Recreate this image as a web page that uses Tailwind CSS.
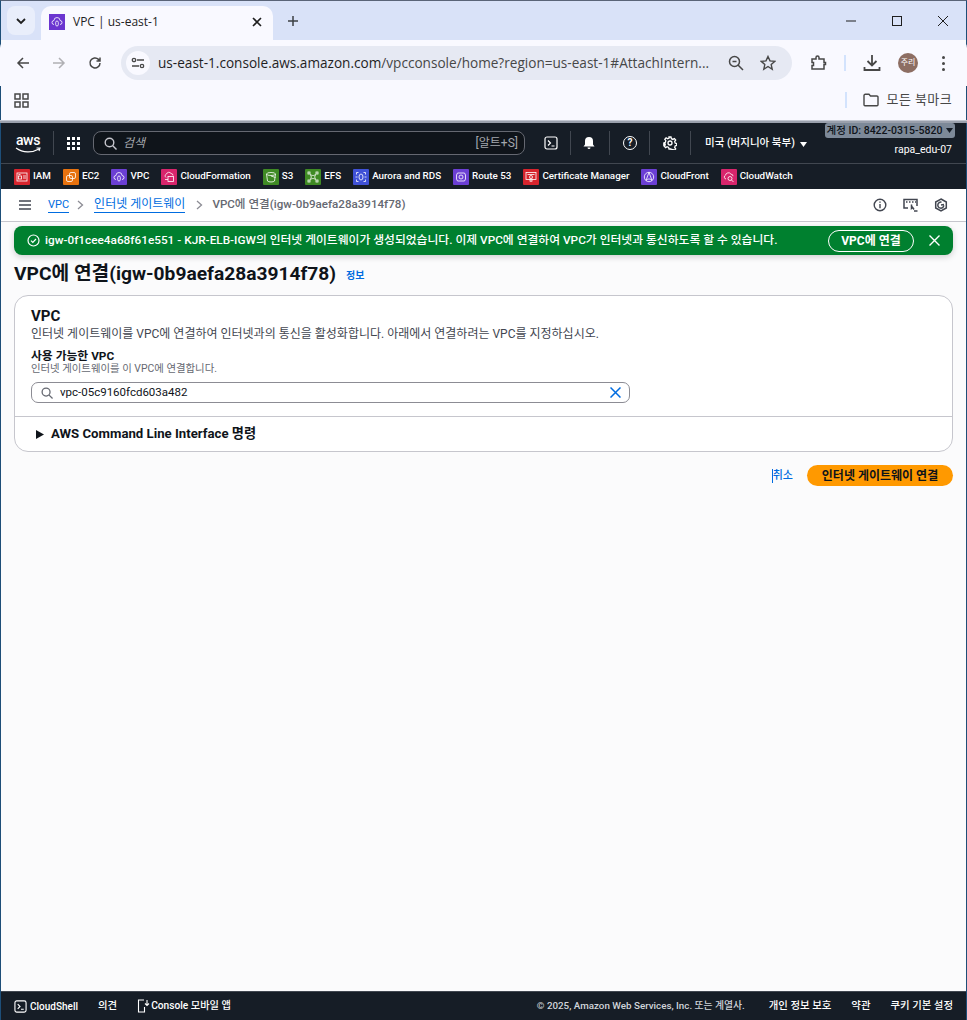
<!DOCTYPE html>
<html lang="ko">
<head>
  <meta charset="UTF-8" />
  <title>VPC | us-east-1</title>
  <script src="https://cdn.jsdelivr.net/npm/@tailwindcss/browser@4"></script>
</head>
<body class="w-[967px] h-[1020px] overflow-hidden bg-[#fbfbfc] font-['Roboto','Noto_Sans_CJK_KR',sans-serif] text-[#0f141a]">
<div class="flex flex-col h-[1020px] border-x border-[#1d4e78] border-t border-t-[#5a6478]">

  <!-- tab strip -->
  <div class="h-[39px] shrink-0 bg-[#d9e2f8] flex items-start relative">
    <div class="mt-[5px] ml-[6px] w-[28px] h-[29px] rounded-lg bg-[#e9eefb] flex items-center justify-center">
      <svg width="12" height="12" viewBox="0 0 12 12" fill="none" stroke="#1f1f1f" stroke-width="1.8"><path d="M2 4l4 4 4-4"/></svg>
    </div>
    <div class="ml-[6px] mt-[5px] w-[232px] h-[34px] bg-[#f9f9ff] rounded-t-[10px] flex items-center pl-[8px] pr-[11px] pb-[3px]">
      <div class="w-4 h-4 bg-[#6b35d0] flex items-center justify-center">
        <svg width="12" height="12" viewBox="0 0 12 12" fill="none" stroke="#fff" stroke-width=".8"><path d="M3 8.5a2 2 0 0 1 0-4 3 3 0 0 1 6 0 2 2 0 0 1 0 4"/><rect x="4.7" y="5" width="2.6" height="5" rx="1.3"/></svg>
      </div>
      <span class="ml-2 text-xs text-[#1f1f1f] font-['Open_Sans',sans-serif]">VPC | us-east-1</span>
      <svg class="ml-auto" width="10" height="10" viewBox="0 0 10 10" stroke="#1f1f1f" stroke-width="1.6"><path d="M1 1l8 8M9 1l-8 8"/></svg>
    </div>
    <svg class="ml-[14px] mt-[14px]" width="12" height="12" viewBox="0 0 12 12" stroke="#3c4043" stroke-width="1.5"><path d="M6 1v10M1 6h10"/></svg>
    <div class="ml-auto flex items-center mt-[15px] gap-[36px] pr-[18px]">
      <svg width="10" height="10" viewBox="0 0 10 10" stroke="#1f1f1f"><path d="M0 5h10"/></svg>
      <svg width="10" height="10" viewBox="0 0 10 10" stroke="#1f1f1f" fill="none"><rect x=".5" y=".5" width="9" height="9"/></svg>
      <svg width="10" height="10" viewBox="0 0 10 10" stroke="#1f1f1f"><path d="M0 0l10 10M10 0L0 10"/></svg>
    </div>
  </div>

  <!-- address bar -->
  <div class="h-[46px] shrink-0 bg-[#f9f9ff] rounded-t-[8px] flex items-center -mx-px px-px relative">
    <svg class="ml-[15px]" width="14" height="14" viewBox="0 0 14 14" fill="none" stroke="#474747" stroke-width="1.5"><path d="M13 7H2M7 2L2 7l5 5"/></svg>
    <svg class="ml-[22px]" width="14" height="14" viewBox="0 0 14 14" fill="none" stroke="#b0b0b4" stroke-width="1.5"><path d="M1 7h11M7 2l5 5-5 5"/></svg>
    <svg class="ml-[22px]" width="14" height="14" viewBox="0 0 14 14" fill="none" stroke="#474747" stroke-width="1.5"><path d="M12 7a5 5 0 1 1-1.5-3.6L12 5M12 1.5V5H8.5"/></svg>
    <div class="ml-[19px] w-[671px] h-[34px] rounded-full bg-[#e6e9f3] flex items-center pl-[5px] pr-[16px]">
      <div class="w-6 h-6 rounded-full bg-[#f9f9ff] flex items-center justify-center">
        <svg width="14" height="14" viewBox="0 0 14 14" fill="none" stroke="#474747" stroke-width="1.3"><path d="M6 4h7M1 10h7"/><circle cx="3" cy="4" r="1.7"/><circle cx="11" cy="10" r="1.7"/></svg>
      </div>
      <span class="ml-[8px] text-[13.6px] text-[#1f1f1f] font-['Open_Sans',sans-serif] whitespace-nowrap">us-east-1.console.aws.amazon.com<span class="text-[#474747]">/vpcconsole/home?region=us-east-1#AttachIntern...</span></span>
      <svg class="ml-auto" width="16" height="16" viewBox="0 0 16 16" fill="none" stroke="#474747" stroke-width="1.5"><circle cx="6.5" cy="6.5" r="5"/><path d="M10 10l5 5M4.5 6.5h4"/></svg>
      <svg class="ml-[16px]" width="16" height="16" viewBox="0 0 16 16" fill="none" stroke="#474747" stroke-width="1.4"><path d="M8 1.5l2 4.4 4.7.5-3.5 3.2 1 4.7L8 11.5l-4.2 2.8 1-4.7L1.3 6.4 6 5.900z"/></svg>
    </div>
    <svg class="ml-[19px]" width="16" height="16" viewBox="0 0 16 16" fill="none" stroke="#474747" stroke-width="1.5"><path d="M1 4h4V2.500a1.500 1.500 0 0 1 3 0V4h5v3.500h1.500v2H13V14H1v-3.500h1.500v-3H1z"/></svg>
    <div class="ml-[17px] w-[2px] h-[16px] bg-[#d3e3fd]"></div>
    <svg class="ml-[17px]" width="18" height="18" viewBox="0 0 18 18" fill="none" stroke="#474747" stroke-width="1.8"><path d="M9 1v10M4.500 7L9 11.500 13.500 7M1.500 13v3h15v-3"/></svg>
    <div class="ml-[17px] w-[20px] h-[20px] rounded-full bg-[#8d6e63] text-white text-[8px] flex items-center justify-center">주리</div>
    <div class="ml-[24px] flex flex-col gap-[3px]">
      <span class="w-[3px] h-[3px] rounded-full bg-[#474747]"></span>
      <span class="w-[3px] h-[3px] rounded-full bg-[#474747]"></span>
      <span class="w-[3px] h-[3px] rounded-full bg-[#474747]"></span>
    </div>
  </div>

  <!-- bookmarks bar -->
  <div class="h-[34px] shrink-0 bg-[#f9f9ff] flex items-center pl-[13px] pb-[6px]">
    <svg width="15" height="15" viewBox="0 0 15 15" fill="none" stroke="#474747" stroke-width="1.5"><rect x="1" y="1" width="5" height="5"/><rect x="9" y="1" width="5" height="5"/><rect x="1" y="9" width="5" height="5"/><rect x="9" y="9" width="5" height="5"/></svg>
    <div class="ml-auto flex items-center pr-[14px]">
      <div class="w-[2px] h-[16px] bg-[#d3e3fd]"></div>
      <svg class="ml-[16px]" width="16" height="14" viewBox="0 0 16 14" fill="none" stroke="#474747" stroke-width="1.4"><path d="M1 2.500A1.200 1.200 0 0 1 2.200 1.300H6l1.500 1.700h6.300A1.200 1.200 0 0 1 15 4.200v7.600a1 1 0 0 1-1 1H2a1 1 0 0 1-1-1z"/></svg>
      <span class="ml-[8px] text-[13px] tracking-[.4px] text-[#474747]">모든 북마크</span>
    </div>
  </div>

  <div class="h-[3px] shrink-0 bg-[#9aa0ac] border-t border-[#c3c7d1] -mx-px"></div>

  <!-- aws top nav -->
  <div class="h-[40px] shrink-0 bg-[#161d26] text-white flex items-center relative">
    <div class="ml-[14px] w-[26px] flex flex-col items-center">
      <span class="text-[14px] leading-[13px] font-medium tracking-[-.3px]">aws</span>
      <svg width="26" height="6" viewBox="0 0 26 6" fill="none" stroke="#fff" stroke-width="1.1"><path d="M1 1c7 5 16 5 23 1M21.500 1H25l-1 3"/></svg>
    </div>
    <div class="ml-[12px] w-px h-[24px] bg-[#414750]"></div>
    <div class="ml-[13px] grid grid-cols-3 gap-[2px]">
      <span class="w-[3px] h-[3px] bg-white"></span><span class="w-[3px] h-[3px] bg-white"></span><span class="w-[3px] h-[3px] bg-white"></span>
      <span class="w-[3px] h-[3px] bg-white"></span><span class="w-[3px] h-[3px] bg-white"></span><span class="w-[3px] h-[3px] bg-white"></span>
      <span class="w-[3px] h-[3px] bg-white"></span><span class="w-[3px] h-[3px] bg-white"></span><span class="w-[3px] h-[3px] bg-white"></span>
    </div>
    <div class="ml-[13px] w-[432px] h-[24px] rounded-lg border border-[#656871] bg-[#0f141a] flex items-center pl-[10px] pr-[6px]">
      <svg width="13" height="13" viewBox="0 0 13 13" fill="none" stroke="#c6c6cd" stroke-width="1.4"><circle cx="5.500" cy="5.500" r="4.300"/><path d="M8.800 8.800L12.500 12.500"/></svg>
      <span class="ml-[6px] text-[12px] italic text-[#a4a7ad]">검색</span>
      <span class="ml-auto text-[12px] text-[#a4a7ad]">[알트+S]</span>
    </div>
    <svg class="ml-[19px]" width="14" height="14" viewBox="0 0 14 14" fill="none" stroke="#fff" stroke-width="1.2"><rect x="1" y="1" width="12" height="12" rx="2"/><path d="M4 4.500L6.500 7 4 9.500M7.500 10H10.500"/></svg>
    <div class="ml-[12px] w-px h-[24px] bg-[#414750]"></div>
    <svg class="ml-[11px]" width="14" height="14" viewBox="0 0 14 14" fill="#fff"><path d="M7 1a4 4 0 0 0-4 4v3.500L1.500 10.500h11L11 8.500V5a4 4 0 0 0-4-4zM5.500 11.500a1.500 1.500 0 0 0 3 0z"/></svg>
    <div class="ml-[13px] w-px h-[24px] bg-[#414750]"></div>
    <div class="ml-[13px] w-[14px] h-[14px] rounded-full border-[1.5px] border-white flex items-center justify-center text-[10px] font-bold leading-none">?</div>
    <div class="ml-[12px] w-px h-[24px] bg-[#414750]"></div>
    <svg class="ml-[13px]" width="14" height="14" viewBox="0 0 14 14" fill="none" stroke="#fff" stroke-width="1.3"><circle cx="7" cy="7" r="2"/><path d="M6 1h2l.4 1.700 1.500.7 1.500-.9 1.300 1.500-1 1.400.4 1.600 1.600.6v1.800l-1.600.6-.4 1.500 1 1.400-1.300 1.400-1.500-.9-1.500.7L8 13H6l-.4-1.600-1.500-.7-1.500.9-1.300-1.400 1-1.400-.4-1.500L.8 8.700V6.900l1.600-.6.400-1.600-1-1.400 1.300-1.500 1.500.9 1.500-.7z"/></svg>
    <div class="ml-[13px] w-px h-[24px] bg-[#414750]"></div>
    <span class="ml-[14px] text-[10.5px] font-medium whitespace-nowrap">미국 (버지니아 북부)</span>
    <svg class="ml-[5px] mt-[2px]" width="7" height="5" viewBox="0 0 7 5" fill="#fff"><path d="M0 0h7L3.500 5z"/></svg>
    <span class="absolute right-[14px] top-[20px] text-[10.5px] leading-[14px]">rapa_edu-07</span>
    <div class="absolute right-[11px] top-0 h-[15px] w-[130px] rounded-[3px] bg-[#7d8998] text-[#0f141a] text-[10.5px] font-medium leading-[15px] flex items-center justify-center gap-[4px] whitespace-nowrap">계정 ID: 8422-0315-5820
      <svg width="7" height="5" viewBox="0 0 7 5" fill="#161d26"><path d="M0 0h7L3.500 5z"/></svg>
    </div>
  </div>

  <!-- service shortcuts -->
  <div class="h-[26px] shrink-0 bg-[#161d26] border-t border-[#414750] text-white text-[9.8px] font-medium flex items-center pl-[13px] whitespace-nowrap">
    <div class="flex items-center gap-[3px]"><span class="w-4 h-4 rounded-[1px] bg-[#d6242d] flex items-center justify-center"><svg width="12" height="12" viewBox="0 0 12 12" fill="none" stroke="#fff" stroke-width=".8"><rect x="1" y="2" width="10" height="8"/><rect x="2.500" y="5" width="3" height="3"/><path d="M7 5h3M7 7h3M2.500 3.500h2"/></svg></span>IAM</div>
    <div class="ml-[12px] flex items-center gap-[3px]"><span class="w-4 h-4 rounded-[1px] bg-[#e7720f] flex items-center justify-center"><svg width="12" height="12" viewBox="0 0 12 12" fill="none" stroke="#fff" stroke-width=".8"><rect x="4.500" y="1.500" width="6" height="6" rx="1.500"/><rect x="1.500" y="4.500" width="6" height="6" rx="1.500"/></svg></span>EC2</div>
    <div class="ml-[12px] flex items-center gap-[3px]"><span class="w-4 h-4 rounded-[1px] bg-[#6b3fd4] flex items-center justify-center"><svg width="12" height="12" viewBox="0 0 12 12" fill="none" stroke="#fff" stroke-width=".8"><path d="M3 8.500a2 2 0 0 1 0-4 3 3 0 0 1 6 0 2 2 0 0 1 0 4"/><rect x="4.700" y="5" width="2.600" height="5" rx="1.300"/></svg></span>VPC</div>
    <div class="ml-[12px] flex items-center gap-[3px]"><span class="w-4 h-4 rounded-[1px] bg-[#d8256c] flex items-center justify-center"><svg width="12" height="12" viewBox="0 0 12 12" fill="none" stroke="#fff" stroke-width=".8"><path d="M3 6.500a2 2 0 0 1 .5-3.500 2.500 2.500 0 0 1 4.500-.5 2 2 0 0 1 2 2"/><rect x="5" y="5.500" width="5.500" height="5"/><path d="M2 8.500h3"/></svg></span>CloudFormation</div>
    <div class="ml-[12px] flex items-center gap-[3px]"><span class="w-4 h-4 rounded-[1px] bg-[#3f8a24] flex items-center justify-center"><svg width="12" height="12" viewBox="0 0 12 12" fill="none" stroke="#fff" stroke-width=".8"><ellipse cx="6" cy="3" rx="4.500" ry="1.500"/><path d="M1.500 3l1 7c1 1.300 6 1.300 7 0l1-7M6 5l4.500 1.500"/></svg></span>S3</div>
    <div class="ml-[12px] flex items-center gap-[3px]"><span class="w-4 h-4 rounded-[1px] bg-[#3f8a24] flex items-center justify-center"><svg width="12" height="12" viewBox="0 0 12 12" fill="none" stroke="#fff" stroke-width=".8"><rect x="1" y="1" width="2" height="2"/><rect x="9" y="1" width="2" height="2"/><rect x="1" y="9" width="2" height="2"/><rect x="9" y="9" width="2" height="2"/><path d="M3 3c2 2 4 2 6 0M3 9c2-2 4-2 6 0M3.500 4c1 1.500 1 2.500 0 4M8.500 4c-1 1.500-1 2.500 0 4"/></svg></span>EFS</div>
    <div class="ml-[12px] flex items-center gap-[3px]"><span class="w-4 h-4 rounded-[1px] bg-[#3f51d6] flex items-center justify-center"><svg width="12" height="12" viewBox="0 0 12 12" fill="none" stroke="#fff" stroke-width=".8"><ellipse cx="6" cy="6" rx="2" ry="3"/><path d="M3.500 1.500H1.500v2M8.500 1.500h2v2M3.500 10.500h-2v-2M8.500 10.500h2v-2M.5 6H2.500M9.500 6h2"/></svg></span>Aurora and RDS</div>
    <div class="ml-[12px] flex items-center gap-[3px]"><span class="w-4 h-4 rounded-[1px] bg-[#6b3fd4] flex items-center justify-center"><svg width="12" height="12" viewBox="0 0 12 12" fill="none" stroke="#fff" stroke-width=".8"><path d="M2.500 2h7l1 2v4l-1 2h-7l-1-2V4z"/><circle cx="6" cy="6" r="2"/></svg></span>Route 53</div>
    <div class="ml-[12px] flex items-center gap-[3px]"><span class="w-4 h-4 rounded-[1px] bg-[#d6242d] flex items-center justify-center"><svg width="12" height="12" viewBox="0 0 12 12" fill="none" stroke="#fff" stroke-width=".8"><rect x="1" y="1.500" width="10" height="7"/><circle cx="6" cy="6" r="1.500"/><path d="M5 7.500v3l1-.7 1 .7v-3M2.500 3.500h7"/></svg></span>Certificate Manager</div>
    <div class="ml-[12px] flex items-center gap-[3px]"><span class="w-4 h-4 rounded-[1px] bg-[#6b3fd4] flex items-center justify-center"><svg width="12" height="12" viewBox="0 0 12 12" fill="none" stroke="#fff" stroke-width=".8"><circle cx="6" cy="6" r="4.700"/><path d="M6 1.300L3 9.500M6 1.300l3 8.200M3 9.500c2-2 4-2 6 0"/></svg></span>CloudFront</div>
    <div class="ml-[12px] flex items-center gap-[3px]"><span class="w-4 h-4 rounded-[1px] bg-[#d8256c] flex items-center justify-center"><svg width="12" height="12" viewBox="0 0 12 12" fill="none" stroke="#fff" stroke-width=".8"><path d="M3 8a2 2 0 0 1-.5-3.800 3 3 0 0 1 5.500-1 2 2 0 0 1 2 2"/><circle cx="7" cy="7.500" r="2"/><path d="M8.500 9l2 2"/></svg></span>CloudWatch</div>
  </div>

  <!-- breadcrumbs -->
  <div class="h-[33px] shrink-0 bg-white border-b border-[#c6c6cd] flex items-center text-[12px] font-medium">
    <svg class="ml-[18px]" width="12" height="10" viewBox="0 0 12 10" stroke="#424650" stroke-width="1.5"><path d="M0 1h12M0 5h12M0 9h12"/></svg>
    <a class="ml-[17px] text-[11px] font-normal text-[#006ce0] border-b border-[#006ce0] leading-[15px]">VPC</a>
    <svg class="ml-[8px]" width="7" height="10" viewBox="0 0 7 10" fill="none" stroke="#8c8c94" stroke-width="1.3"><path d="M1 1l4.500 4L1 9"/></svg>
    <a class="ml-[10px] font-normal text-[#006ce0] border-b border-[#006ce0] leading-[15px]">인터넷 게이트웨이</a>
    <svg class="ml-[11px]" width="7" height="10" viewBox="0 0 7 10" fill="none" stroke="#8c8c94" stroke-width="1.3"><path d="M1 1l4.500 4L1 9"/></svg>
    <span class="ml-[9px] text-[11.6px] text-[#656871] font-medium">VPC에 연결(igw-0b9aefa28a3914f78)</span>
    <div class="ml-auto flex items-center gap-[16px] pr-[18px]">
      <svg width="14" height="14" viewBox="0 0 14 14" fill="none" stroke="#424650" stroke-width="1.4"><circle cx="7" cy="7" r="5.800"/><path d="M7 6v4.200M7 3.500v1.300"/></svg>
      <svg width="15" height="14" viewBox="0 0 15 14" fill="none" stroke="#424650" stroke-width="1.5"><path d="M5 10H1V1.500h13V8"/><path d="M3 4h1.500M6 4h1.500M9 4h1.500M12 4h1"/><path d="M8.500 6.500v4l1.200-1 1.300 2" fill="#424650"/><path d="M11 13h3.500"/></svg>
      <svg width="14" height="14" viewBox="0 0 14 14" fill="none" stroke="#424650" stroke-width="1.5"><path d="M7 1l5.300 3v6L7 13l-5.300-3V4z"/><path d="M9.800 7.500A3 3 0 1 1 7.500 4.200M7 7l3-.5"/></svg>
    </div>
  </div>

  <!-- main -->
  <main class="flex-1 px-[13px] pt-[4px]">
    <div class="h-[29px] rounded-[8px] bg-[#00802f] text-white flex items-center pl-[13px] pr-[13px] shadow-[0_2px_6px_rgba(0,0,0,.18)]">
      <svg width="13" height="13" viewBox="0 0 13 13" fill="none" stroke="#fff" stroke-width="1.2"><circle cx="6.500" cy="6.500" r="5.500"/><path d="M4 6.700l1.800 1.800L9 5"/></svg>
      <span class="ml-[5px] text-[11.8px] font-medium whitespace-nowrap">igw-0f1cee4a68f61e551 - KJR-ELB-IGW의 인터넷 게이트웨이가 생성되었습니다. 이제 VPC에 연결하여 VPC가 인터넷과 통신하도록 할 수 있습니다.</span>
      <div class="ml-auto w-[86px] h-[22px] rounded-full border border-white flex items-center justify-center text-[12px] font-bold">VPC에 연결</div>
      <svg class="ml-[15px]" width="11" height="11" viewBox="0 0 11 11" stroke="#fff" stroke-width="1.4"><path d="M.5.500l10 10M10.500.500l-10 10"/></svg>
    </div>

    <div class="mt-[4px] h-[30px] flex items-center">
      <h1 class="text-[19.2px] font-bold leading-[30px] whitespace-nowrap">VPC에 연결(igw-0b9aefa28a3914f78)</h1>
      <a class="ml-[10px] mt-[2px] text-[#006ce0] text-[10px] font-semibold">정보</a>
    </div>

    <section class="mt-[6px] h-[157px] rounded-[14px] border border-[#c6c6cd] bg-white">
      <div class="h-[121px] border-b border-[#c6c6cd] pl-[16px] pr-[322px] pt-[11px]">
        <h2 class="text-[15px] font-bold leading-[19px]">VPC</h2>
        <p class="mt-[1px] text-[12px] leading-[14px] text-[#424650] whitespace-nowrap">인터넷 게이트웨이를 VPC에 연결하여 인터넷과의 통신을 활성화합니다. 아래에서 연결하려는 VPC를 지정하십시오.</p>
        <div class="mt-[8px] text-[11.8px] font-bold leading-[14px]">사용 가능한 VPC</div>
        <div class="text-[10.4px] leading-[12px] text-[#656871]">인터넷 게이트웨이를 이 VPC에 연결합니다.</div>
        <div class="mt-[7px] h-[21px] rounded-[7px] border border-[#8c8c94] flex items-center pl-[9px] pr-[8px] w-[599px]">
          <svg width="12" height="12" viewBox="0 0 13 13" fill="none" stroke="#656871" stroke-width="1.4"><circle cx="5.500" cy="5.500" r="4.300"/><path d="M8.800 8.800L12.500 12.500"/></svg>
          <span class="ml-[7px] text-[11.5px] text-[#0f141a]">vpc-05c9160fcd603a482</span>
          <svg class="ml-auto" width="11" height="11" viewBox="0 0 11 11" stroke="#006ce0" stroke-width="1.5"><path d="M.5.500l10 10M10.500.500l-10 10"/></svg>
        </div>
      </div>
      <div class="h-[34px] flex items-center pl-[21px]">
        <svg width="8" height="9" viewBox="0 0 8 9" fill="#0f141a"><path d="M0 0l8 4.500L0 9z"/></svg>
        <span class="ml-[7px] text-[13.2px] font-bold">AWS Command Line Interface 명령</span>
      </div>
    </section>

    <div class="mt-[13px] flex items-center justify-end">
      <a class="text-[#006ce0] text-[11px] font-medium border-l border-l-[#006ce0] leading-[14px]">취소</a>
      <div class="ml-[14px] w-[146px] h-[21px] rounded-full bg-[#ff9900] text-[#0f141a] text-[12px] font-bold flex items-center justify-center">인터넷 게이트웨이 연결</div>
    </div>
  </main>

  <!-- footer -->
  <footer class="h-[29px] shrink-0 bg-[#161d26] border-t border-[#414750] text-white text-[10.4px] font-medium flex items-center whitespace-nowrap">
    <svg class="ml-[13px]" width="13" height="13" viewBox="0 0 14 14" fill="none" stroke="#fff" stroke-width="1.2"><rect x="1" y="1" width="12" height="12" rx="2"/><path d="M4 4.500L6.500 7 4 9.500M7.500 10H10.500"/></svg>
    <span class="ml-[3px] text-[10px]">CloudShell</span>
    <span class="ml-[20px]">의견</span>
    <svg class="ml-[20px]" width="13" height="14" viewBox="0 0 13 14" fill="none" stroke="#fff" stroke-width="1.1"><path d="M7 1H1.500v12h6V8M10 1v5M8 4.500L10 6.500l2-2"/></svg>
    <span class="ml-[1px] text-[10.2px]">Console 모바일 앱</span>
    <span class="ml-auto text-[#d1d5db] text-[9.8px]">© 2025, Amazon Web Services, Inc. 또는 계열사.</span>
    <span class="ml-[24px]">개인 정보 보호</span>
    <span class="ml-[20px]">약관</span>
    <span class="ml-[20px] mr-[13px]">쿠키 기본 설정</span>
  </footer>
</div>
</body>
</html>
